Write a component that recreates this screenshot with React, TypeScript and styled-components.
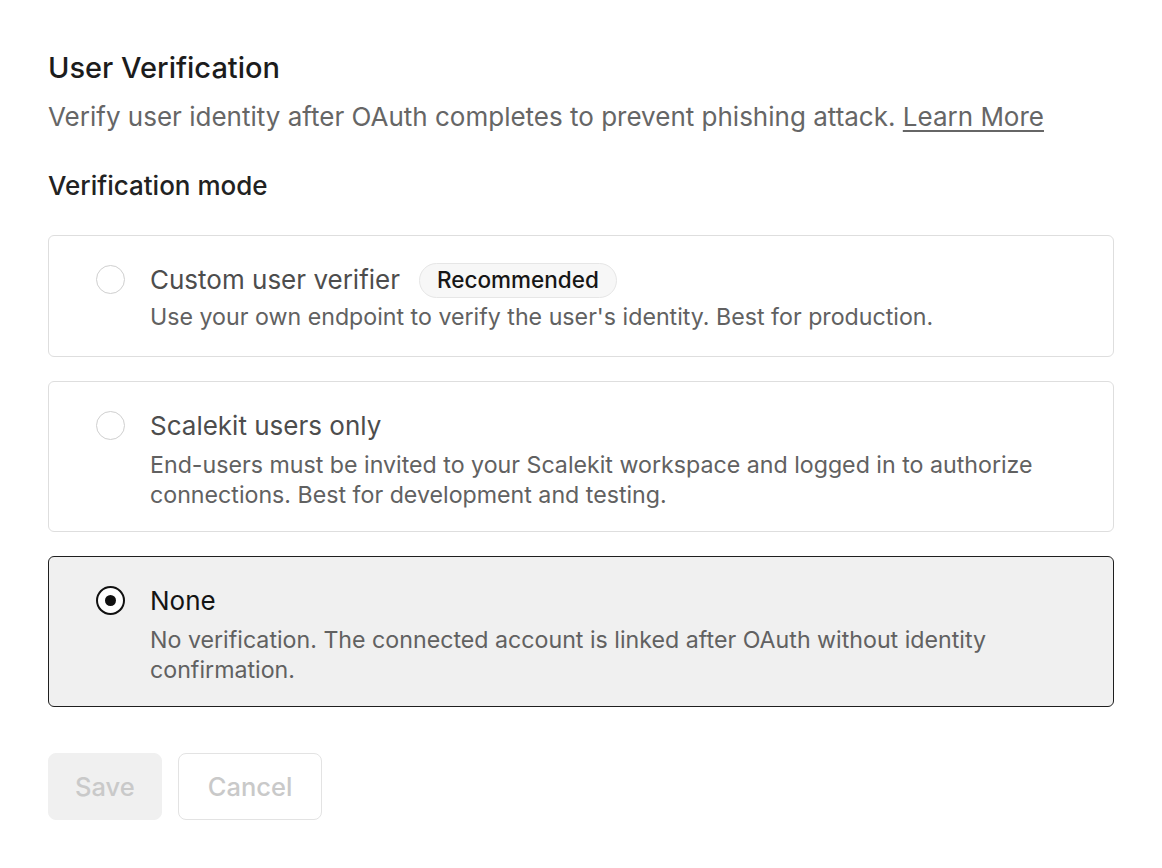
import { useState } from "react";
import styled, { createGlobalStyle } from "styled-components";

const GlobalStyle = createGlobalStyle`
  body {
    margin: 0;
    background: #ffffff;
    font-family: Inter, "Noto Sans", "Liberation Sans", sans-serif;
    -webkit-font-smoothing: antialiased;
  }
`;

const Page = styled.div`
  padding: 52px 48px 40px 48px;
  width: 1066px;
`;

const Title = styled.h2`
  margin: 0;
  font-size: 29px;
  line-height: 32px;
  font-weight: 500;
  color: #1c1c1c;
`;

const Description = styled.p`
  margin: 17px 0 0 0;
  font-size: 26px;
  line-height: 32px;
  color: #666666;
`;

const LearnMore = styled.a`
  color: #666666;
  text-decoration: underline;
  text-decoration-thickness: 1.5px;
  text-underline-offset: 4px;
  cursor: pointer;
`;

const Label = styled.div`
  margin-top: 37px;
  font-size: 26px;
  line-height: 32px;
  font-weight: 500;
  color: #222222;
`;

const Options = styled.div`
  margin-top: 33px;
  display: flex;
  flex-direction: column;
  gap: 24px;
`;

const Card = styled.label<{ $selected: boolean }>`
  display: flex;
  align-items: flex-start;
  gap: 25px;
  padding: 28px 48px 21px 47px;
  border: ${(p) => (p.$selected ? "1.5px solid #1f1f1f" : "1.5px solid #dedede")};
  border-radius: 6px;
  background: ${(p) => (p.$selected ? "#f0f0f0" : "#ffffff")};
  cursor: pointer;
`;

const Radio = styled.span<{ $checked: boolean }>`
  flex: none;
  box-sizing: border-box;
  width: 29px;
  height: 29px;
  margin-top: 1px;
  border-radius: 50%;
  border: ${(p) => (p.$checked ? "2px solid #111111" : "1.5px solid #cfcfcf")};
  background: #ffffff;
  display: flex;
  align-items: center;
  justify-content: center;

  &::after {
    content: "";
    display: ${(p) => (p.$checked ? "block" : "none")};
    width: 11px;
    height: 11px;
    border-radius: 50%;
    background: #111111;
  }
`;

const Body = styled.div<{ $tight: boolean }>`
  display: flex;
  flex-direction: column;
  gap: ${(p) => (p.$tight ? "6px" : "8px")};
  padding-bottom: ${(p) => (p.$tight ? "3px" : "0")};
`;

const OptionTitle = styled.div<{ $selected: boolean }>`
  display: flex;
  align-items: center;
  gap: 19px;
  height: 32px;
  font-size: 26px;
  line-height: 32px;
  color: ${(p) => (p.$selected ? "#141414" : "#4d4d4d")};
`;

const Badge = styled.span`
  display: inline-flex;
  align-items: center;
  height: 35px;
  box-sizing: border-box;
  padding: 0 17px;
  border-radius: 18px;
  border: 1px solid #e6e6e6;
  background: #f7f7f7;
  font-size: 22.5px;
  font-weight: 500;
  color: #161616;
`;

const OptionText = styled.div`
  font-size: 23.2px;
  line-height: 30px;
  color: #616161;
  max-width: 900px;
`;

const Actions = styled.div`
  margin-top: 46px;
  display: flex;
  gap: 16px;
`;

const Button = styled.button<{ $variant: "filled" | "outline" }>`
  height: 67px;
  padding: ${(p) => (p.$variant === "filled" ? "0 26px" : "0 29px")};
  border-radius: 8px;
  font-family: inherit;
  font-size: 25.5px;
  font-weight: 500;
  color: #c9c9c9;
  border: ${(p) => (p.$variant === "filled" ? "1.5px solid #f0f0f0" : "1.5px solid #e3e3e3")};
  background: ${(p) => (p.$variant === "filled" ? "#f0f0f0" : "#ffffff")};
  cursor: not-allowed;
`;

type Mode = "custom" | "scalekit" | "none";

const options: { id: Mode; title: string; text: string; badge?: string }[] = [
  {
    id: "custom",
    title: "Custom user verifier",
    badge: "Recommended",
    text: "Use your own endpoint to verify the user's identity. Best for production.",
  },
  {
    id: "scalekit",
    title: "Scalekit users only",
    text: "End-users must be invited to your Scalekit workspace and logged in to authorize connections. Best for development and testing.",
  },
  {
    id: "none",
    title: "None",
    text: "No verification. The connected account is linked after OAuth without identity confirmation.",
  },
];

export default function App() {
  const [mode, setMode] = useState<Mode>("none");

  return (
    <>
      <GlobalStyle />
      <Page>
        <Title>User Verification</Title>
        <Description>
          Verify user identity after OAuth completes to prevent phishing attack.{" "}
          <LearnMore>Learn More</LearnMore>
        </Description>
        <Label>Verification mode</Label>
        <Options>
          {options.map((o) => {
            const selected = o.id === mode;
            return (
              <Card key={o.id} $selected={selected} onClick={() => setMode(o.id)}>
                <Radio $checked={selected} />
                <Body $tight={!!o.badge}>
                  <OptionTitle $selected={selected}>
                    {o.title}
                    {o.badge && <Badge>{o.badge}</Badge>}
                  </OptionTitle>
                  <OptionText>{o.text}</OptionText>
                </Body>
              </Card>
            );
          })}
        </Options>
        <Actions>
          <Button $variant="filled">Save</Button>
          <Button $variant="outline">Cancel</Button>
        </Actions>
      </Page>
    </>
  );
}
